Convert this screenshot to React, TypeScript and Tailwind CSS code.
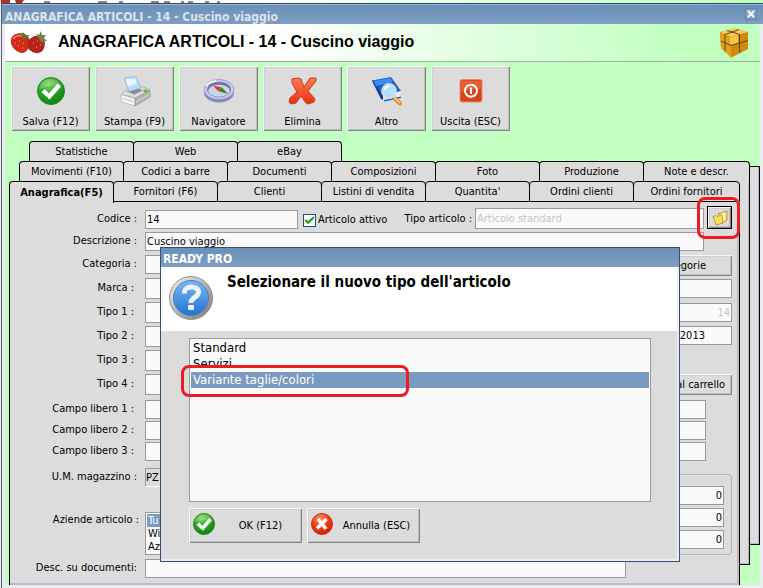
import React, { useState } from "react";
import { Check, X } from "lucide-react";
import clsx from "clsx";

const BEVEL = "bg-[#dcdcdc] shadow-[inset_1px_1px_0_#f6f6f6,inset_-1px_-1px_0_#858585,inset_2px_2px_0_#d0d0d4,inset_-2px_-2px_0_#bdbdc2]";
const FIELD = "h-[19px] border border-[#999] bg-[#fafafa] px-px outline-none";
const TALL_FIELD = "h-[21px] border border-[#999] bg-[#fafafa] px-px outline-none";

const SaveIcon = ({ size }: { size: number }) => (
  <svg width={size} height={size} viewBox="0 0 28 28" aria-hidden="true">
    <defs>
      <radialGradient id="okGreen" cx="0.4" cy="0.25" r="0.8">
        <stop offset="0" stopColor="#7fd35c" />
        <stop offset="0.5" stopColor="#2ba326" />
        <stop offset="1" stopColor="#0b7d12" />
      </radialGradient>
    </defs>
    <circle cx="14" cy="14" r="13.5" fill="url(#okGreen)" stroke="#1f8a1c" />
    <path d="M2 12a12 11 0 0 1 23-3c-8-1-17 0-23 3z" fill="#fff" opacity="0.2" />
    <path d="M4.500 15l3.500-3 4 4.500L20.500 6.500 24 9.500 12.500 22.500z" fill="#fff" />
  </svg>
);

const PrinterIcon = () => (
  <svg width="32" height="32" viewBox="0 0 32 32" aria-hidden="true">
    <path d="M2 19.500L9 13l13-2 9 4-14 8z" fill="#dedede" stroke="#9b9b9b" strokeWidth="0.600" />
    <path d="M7 16l12-2.500 5 2-9 4z" fill="#8b8b8b" />
    <path d="M5 3.500C9 1 13 2.500 17 1.500l5 11.500-12 3.500z" fill="#b9dcf8" stroke="#86aed2" strokeWidth="0.600" />
    <path d="M7 4.500c3-1 6 0 9-1l2 5-9 3z" fill="#eaf5ff" />
    <path d="M2 19.500l14 4V31L2 26.500z" fill="#f7f7f7" stroke="#a2a2a2" strokeWidth="0.600" />
    <path d="M16 23.500l15-8.500v7l-15 9z" fill="#b4b4b4" stroke="#8b8b8b" strokeWidth="0.600" />
    <path d="M3.500 22.500l11 3.500v1.500l-11-3.500z" fill="#cfcfcf" />
    <path d="M17 27.500l13-8" stroke="#e0e0e0" strokeWidth="0.800" />
    <ellipse cx="26.500" cy="16" rx="2.200" ry="1.400" fill="#4fc02e" />
  </svg>
);

const CompassIcon = () => (
  <svg width="32" height="32" viewBox="0 0 32 32" aria-hidden="true">
    <ellipse cx="16" cy="17.500" rx="15" ry="10" fill="#8386bf" />
    <ellipse cx="16" cy="14.500" rx="15" ry="10" fill="#c6c9ea" stroke="#9396c8" strokeWidth="0.800" />
    <ellipse cx="16" cy="14.500" rx="11.500" ry="7.300" fill="#6f73a8" stroke="#6a6ea2" strokeWidth="0.800" />
    <ellipse cx="16" cy="15.800" rx="10.800" ry="6" fill="#cfd2ec" />
    <path d="M10 10.500l9 2-4 3.500z" fill="#e5391f" />
    <path d="M25 19l-6-6.500-4 3.500z" fill="#2e8c2c" />
    <path d="M3 11a13 9 0 0 1 10-5" stroke="#fff" strokeWidth="1.500" fill="none" />
  </svg>
);

const DeleteIcon = () => (
  <svg width="32" height="32" viewBox="0 0 32 32" aria-hidden="true">
    <defs>
      <linearGradient id="delRed" x1="0" y1="0" x2="0" y2="1">
        <stop offset="0" stopColor="#ff7a55" />
        <stop offset="1" stopColor="#e6340f" />
      </linearGradient>
    </defs>
    <path
      d="M5 4l6-1 3 1 3 8 6-9 6 0 0 3-8 10 7 8-1 3-6 2-2-1-5-7-5 7-5 1-2-2 1-4 7-6-5-9z"
      fill="url(#delRed)"
      stroke="#c23a1a"
      strokeLinejoin="round"
    />
  </svg>
);

const BookSearchIcon = () => (
  <svg width="32" height="32" viewBox="0 0 32 32" aria-hidden="true">
    <path d="M1 6l9 18 2 1V19L2 5z" fill="#123f93" />
    <path d="M1 5.500L20 2l10 14-17 5z" fill="#1a5fcc" />
    <path d="M3 6L19.500 3 22 7 5 11z" fill="#3c8df0" />
    <path d="M12 21l18-5-1 3 1 3-17 4z" fill="#e4ecf7" />
    <path d="M13 25l17-3.500v1.500l-17 3.500z" fill="#1a5fcc" />
    <path d="M24 23.500l5 5" stroke="#f08a24" strokeWidth="4" strokeLinecap="round" />
    <path d="M23 22l6 6" stroke="#ffd8a0" strokeWidth="1.300" />
    <circle cx="18" cy="16" r="7" fill="#b3e0fa" stroke="#d3dbe2" strokeWidth="1.800" />
    <path d="M13.500 15a5 5 0 0 1 5-3.800" stroke="#fff" strokeWidth="2" fill="none" />
  </svg>
);

const PowerIcon = () => (
  <svg width="32" height="32" viewBox="0 0 32 32" aria-hidden="true">
    <rect x="5" y="4.500" width="22" height="22.500" rx="2" fill="#d9401c" stroke="#e98a70" />
    <path d="M6 5.500h20v9c-7-2-14 0-20 3z" fill="#ef6a42" opacity="0.700" />
    <circle cx="16" cy="15.700" r="6" fill="none" stroke="#fff" strokeWidth="2" />
    <path d="M16 12.500v6.400" stroke="#fff" strokeWidth="2.200" />
  </svg>
);

const StrawberriesIcon = () => (
  <svg width="38" height="26" viewBox="0 0 38 26" aria-hidden="true">
    <path d="M1 10C1 5 8 2 15 4c5 3 6 8 4 13-2 4-4 6-8 6C5 21 0 16 1 10z" fill="#cf2a1b" />
    <path d="M19 10c3-4 9-6 14-2 3 4 2 9 0 12-3 4-8 4-12 1-5-3-4-7-2-11z" fill="#b4231a" />
    <path d="M3 9c2-3 6-4 9-3" stroke="#f0826d" strokeWidth="1.500" fill="none" />
    <path d="M5 13h1M9 11h1M8 16h1M13 13h1M12 18h1M23 13h1M27 11h1M26 17h1M30 15h1" stroke="#f3a27a" />
    <path d="M8 3l4 1 1-2 2 3 5 0-3 2 2 3-4-2-2 1-1-3z" fill="#5f7a33" />
    <path d="M26 4l3 1 2-4 1 4 4 0-2 3 3 3-4 0-1 3-2-4z" fill="#6c8840" />
  </svg>
);

const BoxIcon = () => (
  <svg width="30" height="30" viewBox="0 0 30 30" aria-hidden="true">
    <path d="M1 4L16 0.500 29 4v17L12 29.500 2 20z" fill="#d9930f" />
    <path d="M1 4L16 0.500 29 4 12 9z" fill="#f6cc59" />
    <path d="M1 4l11 5v20.500L2 20z" fill="#e3a01b" />
    <path d="M12 9l17-5v17l-17 8.500z" fill="#d08a0b" />
    <path d="M11 9.500l8-2.500v8l-8 2.500z" fill="#f7c64a" />
    <path d="M6 6.500l14-5M8 2.500l13 4M6 6.500v17M20.500 6.500V25M2 13l10 4.500 17-5" stroke="#5a4520" fill="none" />
  </svg>
);

const FolderIcon = () => (
  <svg width="16" height="16" viewBox="0 0 16 16" aria-hidden="true">
    <path d="M6 3.500l3 0 1-1.500 5-1v9l-4 3z" fill="#f6dc6a" stroke="#a9821a" strokeWidth="0.700" />
    <path d="M7 5l6-2v7l-3 2z" fill="#fff6bf" />
    <path d="M1 6.500l3-1 1 1 5-1.500 1 8-7 2z" fill="#fbe05c" stroke="#a9821a" strokeWidth="0.700" />
  </svg>
);

const QuestionIcon = () => (
  <svg width="46" height="46" viewBox="0 0 46 46" aria-hidden="true">
    <defs>
      <linearGradient id="ring" x1="0" y1="0" x2="1" y2="1">
        <stop offset="0" stopColor="#f2f2f2" />
        <stop offset="1" stopColor="#777" />
      </linearGradient>
      <linearGradient id="qBlue" x1="0" y1="0" x2="0" y2="1">
        <stop offset="0" stopColor="#7ab8f2" />
        <stop offset="1" stopColor="#1f74d6" />
      </linearGradient>
    </defs>
    <circle cx="23" cy="23" r="21.500" fill="url(#ring)" stroke="#8f8f8f" />
    <circle cx="23" cy="23" r="17.500" fill="url(#qBlue)" stroke="#4a7fb8" />
    <path d="M16.500 18.500v-2c1-6 14.500-6 14 1 0 5-8 5-7.500 10.500" stroke="#f1f1fb" strokeWidth="5" fill="none" />
    <rect x="20" y="30" width="6" height="5" rx="1" fill="#f1f1fb" />
  </svg>
);

const CancelIcon = () => (
  <svg width="22" height="22" viewBox="0 0 22 22" aria-hidden="true">
    <defs>
      <radialGradient id="noRed" cx="0.4" cy="0.25" r="0.8">
        <stop offset="0" stopColor="#ff8c62" />
        <stop offset="0.5" stopColor="#ef3d16" />
        <stop offset="1" stopColor="#c81d05" />
      </radialGradient>
    </defs>
    <circle cx="11" cy="11" r="10.500" fill="url(#noRed)" stroke="#cf3312" />
    <path d="M7 6l8 10M15.500 6L6 15.500" stroke="#fff" strokeWidth="3.500" />
  </svg>
);

const actions = [
  { label: "Salva (F12)", icon: <span className="p-[2px]"><SaveIcon size={28} /></span> },
  { label: "Stampa (F9)", icon: <PrinterIcon /> },
  { label: "Navigatore", icon: <CompassIcon /> },
  { label: "Elimina", icon: <DeleteIcon /> },
  { label: "Altro", icon: <BookSearchIcon /> },
  { label: "Uscita (ESC)", icon: <PowerIcon /> },
];

const tabRows = [
  ["Statistiche", "Web", "eBay"],
  ["Movimenti (F10)", "Codici a barre", "Documenti", "Composizioni", "Foto", "Produzione", "Note e descr."],
  ["Anagrafica(F5)", "Fornitori (F6)", "Clienti", "Listini di vendita", "Quantita'", "Ordini clienti", "Ordini fornitori"],
];

const itemTypes = ["Standard", "Servizi", "Variante taglie/colori"];

function Tab({ label, active, grow, front }: { label: string; active?: boolean; grow?: boolean; front?: boolean }) {
  return (
    <button
      role="tab"
      aria-selected={!!active}
      className={clsx(
        "rounded-t-[4px] border-x border-t border-black bg-[#dcdcdc] text-center whitespace-nowrap",
        grow ? "min-w-0 flex-1" : "-mr-px w-[105px] shrink-0",
        active ? "h-[22px] font-bold" : "h-5 pt-px",
        front && !active && "h-[21px] border-b",
      )}
    >
      {label}
    </button>
  );
}

function FormRow({ id, label, inset, children }: { id: string; label: string; inset?: boolean; children: React.ReactNode }) {
  return (
    <div className="flex items-center">
      <label htmlFor={id} className={clsx("w-[135px] shrink-0 pb-px text-right whitespace-nowrap", inset ? "pr-[11px]" : "pr-2")}>
        {label}
      </label>
      {children}
    </div>
  );
}

function TypeDialog() {
  const [selected, setSelected] = useState("Variante taglie/colori");

  return (
    <div
      role="dialog"
      aria-labelledby="dialog-heading"
      className="absolute top-[247px] left-[160px] w-[520px] border border-[#34506e] bg-[#dcdcdc] shadow-[inset_-2px_-2px_0_#e9eef4]"
    >
      <div className="h-[19px] bg-linear-to-b from-[#6b90b8] to-[#7d9ec3] pl-[2px] text-[12px] leading-[23px] font-bold text-white">
        READY PRO
      </div>
      <div className="mr-[2px] flex h-16 bg-white pt-2 pl-[7px]">
        <QuestionIcon />
        <h2 id="dialog-heading" className="pl-[13px] text-[15px] leading-[14px] font-bold">
          Selezionare il nuovo tipo dell'articolo
        </h2>
      </div>
      <div className="px-7 pt-[7px] pb-[18px]">
        <div className="relative">
          <select
            size={10}
            aria-label="Tipo dell'articolo"
            value={selected}
            onChange={(e) => setSelected(e.target.value)}
            className="block h-[164px] w-full appearance-none overflow-hidden border border-[#999] bg-[#fafafa] p-px text-[13px] outline-none"
          >
            {itemTypes.map((t) => (
              <option key={t} value={t} className="h-4 px-[2px] py-0 leading-4 checked:bg-[linear-gradient(#7a9bc0,#7a9bc0)] checked:text-white">
                {t}
              </option>
            ))}
          </select>
          <div className="pointer-events-none absolute top-[27px] -left-2 h-8 w-[228px] rounded-[8px] border-3 border-[#ed1c24]" />
        </div>
        <div className="mt-[6px] flex gap-[5px]">
          <button className={clsx(BEVEL, "flex h-[35px] w-[113px] items-center pb-[3px] pl-1")}>
            <SaveIcon size={22} />
            <span className="flex-1 pt-[3px] pl-1">OK (F12)</span>
          </button>
          <button className={clsx(BEVEL, "flex h-[35px] w-[113px] items-center pb-[3px] pl-1")}>
            <CancelIcon />
            <span className="flex-1 pt-[3px]">Annulla (ESC)</span>
          </button>
        </div>
      </div>
    </div>
  );
}

export default function App() {
  return (
    <div className="relative flex min-h-screen flex-col overflow-hidden bg-[#f0f0f0] pl-px font-['DejaVu_Sans_Condensed','DejaVu_Sans',sans-serif] text-[11px] leading-[14px] text-black">
      {/* Sliver of the window underneath */}
      <div className="h-[3px] bg-linear-to-r from-white from-30% to-[#c0ffc0]">
        <svg width="260" height="3" viewBox="0 0 260 3" aria-hidden="true">
          <path d="M0 0h9v3H0zM14 0h9l-2 3h-6z" fill="#b3301f" />
          <path d="M43 2h6M97 2h9M118 2h4M150 2h8M163 2h6M180 2h3M187 2h5M204 2h4M216 2h3" stroke="#111" />
        </svg>
      </div>

      <div className="flex flex-1 flex-col border-t border-l border-t-[#2f4a5e] border-l-[#4d5f70]">
        <div className="flex h-5 items-center justify-between border-t border-[#9db8d6] bg-linear-to-b from-[#6b90b8] to-[#7d9ec3] pr-[7px] pl-[3px] text-[12px] font-bold text-[#dde3ea]">
          <span className="pt-1">ANAGRAFICA ARTICOLI - 14 - Cuscino viaggio</span>
          <button aria-label="Chiudi" className="mb-px flex h-[10px] w-[10px] items-center justify-center bg-[#7f9fc4] text-white outline outline-[#5f84ac]">
            <X size={10} strokeWidth={5} />
          </button>
        </div>

        <div className="flex flex-1 flex-col border-x-3 border-b-3 border-[#ececf2] bg-[#c0ffc0]">
          <header className="flex h-[38px] items-center border-b border-[#a9a9a9] bg-linear-to-r from-white from-35% to-[#c0ffc0] to-90% pr-[11px] pl-[5px]">
            <StrawberriesIcon />
            <h1 className="flex-1 pb-px pl-[10px] font-['Liberation_Sans',Arial,sans-serif] text-[16px] leading-5 font-bold">
              ANAGRAFICA ARTICOLI - 14 - Cuscino viaggio
            </h1>
            <BoxIcon />
          </header>

          <div className="flex gap-[5px] px-[6px] pt-1">
            {actions.map((a) => (
              <button key={a.label} className={clsx(BEVEL, "flex h-[65px] w-[79px] flex-col items-center justify-between pt-[9px] pb-[2px] whitespace-nowrap")}>
                {a.icon}
                {a.label}
              </button>
            ))}
          </div>

          <div role="tablist" className="mt-[10px] flex pl-6">
            {tabRows[0].map((t) => (
              <Tab key={t} label={t} />
            ))}
          </div>
          <div role="tablist" className="mr-[10px] flex pl-[14px]">
            {tabRows[1].map((t, i) => (
              <Tab key={t} label={t} grow={i === 6} />
            ))}
          </div>

          <div className="flex flex-1 pl-1">
            <div className="flex min-w-0 flex-1 flex-col">
              <div role="tablist" className="flex bg-[#dcdcdc]">
                {tabRows[2].map((t, i) => (
                  <Tab key={t} label={t} active={i === 0} grow={i === 6} front />
                ))}
              </div>

              <div className="flex flex-1 flex-col border-x border-black">
                <form className="flex flex-1 flex-col border-r-2 border-b-2 border-[#bcbcbc] bg-[#dcdcdc] pt-[3px] pr-[5px] pb-[5px]">
                  <div className="flex items-end">
                    <FormRow id="codice" label="Codice :">
                      <input id="codice" defaultValue="14" className={clsx(FIELD, "w-[153px]")} />
                    </FormRow>
                    <div className="flex items-center pb-[2px] pl-[5px]">
                      <span className="relative mr-[2px] h-[13px] w-[13px]">
                        <input id="attivo" type="checkbox" defaultChecked className="block h-[13px] w-[13px] appearance-none border border-[#1d4e7a] bg-white" />
                        <Check size={11} strokeWidth={5} className="pointer-events-none absolute top-px left-px text-[#21a121]" />
                      </span>
                      <label htmlFor="attivo" className="w-[72px] whitespace-nowrap">Articolo attivo</label>
                    </div>
                    <label htmlFor="tipo" className="w-[85px] pr-[3px] pb-[3px] text-right whitespace-nowrap">Tipo articolo :</label>
                    <input id="tipo" disabled defaultValue="Articolo standard" className={clsx(TALL_FIELD, "min-w-0 flex-1 text-[#c3c3c3]")} />
                    <div className="relative ml-[3px]">
                      <button type="button" aria-label="Cambia tipo articolo" className={clsx(BEVEL, "flex h-[23px] w-[25px] items-center justify-center border border-black")}>
                        <FolderIcon />
                      </button>
                      <div className="pointer-events-none absolute -top-[9px] -left-[10px] h-[42px] w-[43px] rounded-[8px] border-3 border-[#ed1c24]" />
                    </div>
                  </div>

                  <div className="mt-[3px] mr-7 flex flex-col">
                    <FormRow id="descrizione" label="Descrizione :">
                      <input id="descrizione" defaultValue="Cuscino viaggio" className={clsx(FIELD, "min-w-0 flex-1")} />
                    </FormRow>
                  </div>

                  <div className="mt-1 flex justify-between">
                    <div>
                      <FormRow id="categoria" label="Categoria :">
                        <input id="categoria" className={clsx(FIELD, "w-[153px]")} />
                      </FormRow>
                      <div className="mt-[4px] flex flex-col gap-[3px]">
                        {["Marca :", "Tipo 1 :", "Tipo 2 :", "Tipo 3 :", "Tipo 4 :"].map((l) => (
                          <FormRow key={l} id={l} label={l} inset>
                            <input id={l} className={clsx(TALL_FIELD, "w-[153px]")} />
                          </FormRow>
                        ))}
                      </div>
                      <div className="mt-[5px] flex flex-col gap-[2px]">
                        {["Campo libero 1 :", "Campo libero 2 :", "Campo libero 3 :"].map((l) => (
                          <FormRow key={l} id={l} label={l} inset>
                            <input id={l} className={clsx(FIELD, "w-[153px]")} />
                          </FormRow>
                        ))}
                      </div>
                      <div className="mt-[7px]">
                        <FormRow id="um" label="U.M. magazzino :">
                          <select id="um" className="h-[19px] w-[60px] appearance-none border border-[#999] border-r-white border-b-white bg-[#dcdcdc]">
                            <option>PZ</option>
                          </select>
                        </FormRow>
                      </div>
                      <div className="mt-[25px] flex items-start">
                        <label htmlFor="aziende" className="w-[135px] pt-px pr-[6px] text-right whitespace-nowrap">Aziende articolo :</label>
                        <select id="aziende" size={3} defaultValue="Tu" className="h-[43px] w-[153px] appearance-none overflow-hidden border border-[#999] bg-[#fafafa] p-px outline-none">
                          {["Tu", "Wi", "Az"].map((o) => (
                            <option key={o} className="h-[13px] px-px py-0 checked:bg-[linear-gradient(#7a9bc0,#7a9bc0)] checked:text-white">{o}</option>
                          ))}
                        </select>
                      </div>
                    </div>

                    <div className="flex w-[150px] flex-col">
                      <button type="button" className={clsx(BEVEL, "h-[21px] pr-[26px] text-right")}>Categorie</button>
                      <input aria-label="Marca estesa" className={clsx(FIELD, "mt-[3px]")} />
                      <input aria-label="Numero" disabled defaultValue="14" className={clsx(FIELD, "mt-[5px] text-right text-[#c3c3c3]")} />
                      <input aria-label="Anno" defaultValue="2013" className={clsx(FIELD, "mt-1 pr-[26px] text-right")} />
                      <button type="button" className={clsx(BEVEL, "mt-[29px] h-[21px] pr-[7px] text-right")}>al carrello</button>
                      <div className="mt-[5px] mr-[26px] flex flex-col gap-[2px]">
                        <input aria-label="Campo libero 4" className={FIELD} />
                        <input aria-label="Campo libero 5" className={FIELD} />
                        <input aria-label="Campo libero 6" className={FIELD} />
                      </div>
                      <fieldset className="mt-[13px] flex h-[81px] flex-col gap-[3px] rounded-[4px] border border-[#b2b2b2] pt-[11px] pr-[7px]">
                        <input aria-label="Giacenza" defaultValue="0" className={clsx(FIELD, "text-right")} />
                        <input aria-label="Impegnato" defaultValue="0" className={clsx(FIELD, "text-right")} />
                        <input aria-label="Ordinato" defaultValue="0" className={clsx(FIELD, "text-right")} />
                      </fieldset>
                    </div>
                  </div>

                  <div className="mt-1 mr-[106px] flex flex-col">
                    <FormRow id="desc-doc" label="Desc. su documenti:">
                      <input id="desc-doc" className={clsx(FIELD, "min-w-0 flex-1")} />
                    </FormRow>
                  </div>
                </form>
              </div>
            </div>

            {/* Edges of the tab pages behind */}
            <div className="mb-5 w-[10px] border-r border-b border-black bg-[#dcdcdc] shadow-[inset_-1px_-1px_0_#bcbcbc]" />
            <div className="-mt-[15px] mb-10 w-[10px] border-t border-r border-b border-black bg-[#dcdcdc] shadow-[inset_-1px_-1px_0_#bcbcbc]" />
          </div>
        </div>
      </div>

      <TypeDialog />
    </div>
  );
}
